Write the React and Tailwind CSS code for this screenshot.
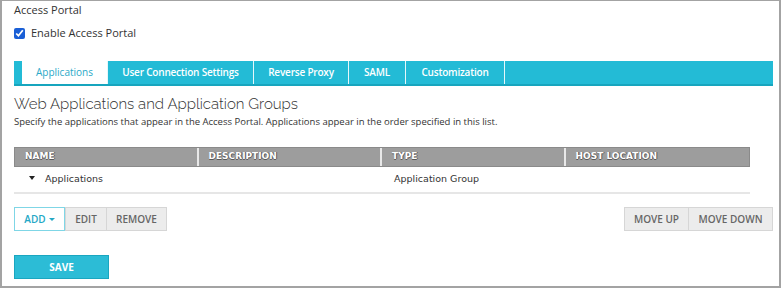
import { useState } from "react";

const tabs = ["Applications", "User Connection Settings", "Reverse Proxy", "SAML", "Customization"];
const tabWidths = ["w-[86px]", "w-[146px]", "w-[95px]", "w-[57px]", "w-[99px]"];

export default function App() {
  const [active, setActive] = useState(0);
  const [enabled, setEnabled] = useState(true);

  return (
    <div className="w-[781px] h-[288px] bg-white border-2 border-t border-[#a3a3a3] overflow-hidden font-['Open_Sans',sans-serif] text-[#333]">
      <div className="pl-[12px] pr-[6px]">
        <div className="pt-[1px] text-[11px] leading-[15px]">Access Portal</div>
        <label className="mt-[9px] flex items-center gap-[6px] text-[11px] leading-[14px]">
          <input
            type="checkbox"
            checked={enabled}
            onChange={() => setEnabled(!enabled)}
            className="w-[11px] h-[11px] m-0 accent-[#1a5fd6]"
          />
          Enable Access Portal
        </label>

        {/* tab bar */}
        <div className="mt-[21px] h-[25px] flex bg-[#23bbd6] border-b-2 border-[#17a5be] pl-[8px]">
          {tabs.map((t, i) => (
            <button
              key={t}
              onClick={() => setActive(i)}
              className={`${tabWidths[i]} h-[23px] text-[10px] border-r border-[#e6f7fa] ${
                active === i ? "bg-white text-[#2aa9c8] font-normal" : "text-white font-semibold tracking-[-0.2px]"
              }`}
            >
              {t}
            </button>
          ))}
        </div>

        <h2 className="mt-[8px] text-[15px] leading-[20px] font-light font-['Raleway','Open_Sans',sans-serif] text-[#333]">
          Web Applications and Application Groups
        </h2>
        <p className="mt-[1px] text-[9.5px] leading-[14px] text-[#333]">
          Specify the applications that appear in the Access Portal. Applications appear in the order specified in this list.
        </p>

        {/* table */}
        <div className="mt-[18px] w-[736px] font-['DejaVu_Sans',sans-serif]">
          <div className="grid grid-cols-4 h-[20px] bg-[#9d9d9d] border border-[#8a8a8a]">
            {["NAME", "DESCRIPTION", "TYPE", "HOST LOCATION"].map((h, i) => (
              <div
                key={h}
                className={`pl-[10px] flex items-center text-[9px] font-bold text-white [text-shadow:1px_0_0_#5a5a5a,0_1px_0_#5a5a5a] ${
                  i < 3 ? "border-r-2 border-[#e8e8e8]" : ""
                }`}
              >
                {h}
              </div>
            ))}
          </div>
          <div className="grid grid-cols-4 h-[27px] border-b-2 border-[#e6e6e6] text-[9.5px] text-[#333]">
            <div className="flex items-center pl-[15px] gap-[10px]">
              <span className="w-0 h-0 border-l-[3px] border-r-[3px] border-t-[4px] border-l-transparent border-r-transparent border-t-[#222] -mt-[4px]" />
              Applications
            </div>
            <div />
            <div className="flex items-center pl-[12px]">Application Group</div>
            <div />
          </div>
        </div>

        {/* buttons */}
        <div className="mt-[13px] flex justify-between">
          <div className="flex">
            <button className="w-[51px] h-[24px] border border-[#7fd6e6] bg-white text-[#23a8c6] text-[10px] font-semibold flex items-center justify-center gap-[3px]">
              ADD
              <span className="w-0 h-0 border-l-[3px] border-r-[3px] border-t-[3px] border-l-transparent border-r-transparent border-t-[#23a8c6] mt-[1px]" />
            </button>
            <button className="w-[42px] h-[24px] border border-[#d6d6d6] bg-[#ececec] text-[#666] text-[10px] font-semibold">
              EDIT
            </button>
            <button className="w-[60px] h-[24px] border border-l-0 border-[#d6d6d6] bg-[#ececec] text-[#666] text-[10px] font-semibold">
              REMOVE
            </button>
          </div>
          <div className="flex">
            <button className="w-[65px] h-[24px] border border-[#d6d6d6] bg-[#ececec] text-[#666] text-[10px] font-semibold">
              MOVE UP
            </button>
            <button className="w-[84px] h-[24px] border border-l-0 border-[#d6d6d6] bg-[#ececec] text-[#666] text-[10px] font-semibold">
              MOVE DOWN
            </button>
          </div>
        </div>

        <button className="mt-[24px] w-[95px] h-[24px] bg-[#2cbcd6] border border-[#1aa6c0] text-white text-[10px] font-bold">
          SAVE
        </button>
      </div>
    </div>
  );
}
